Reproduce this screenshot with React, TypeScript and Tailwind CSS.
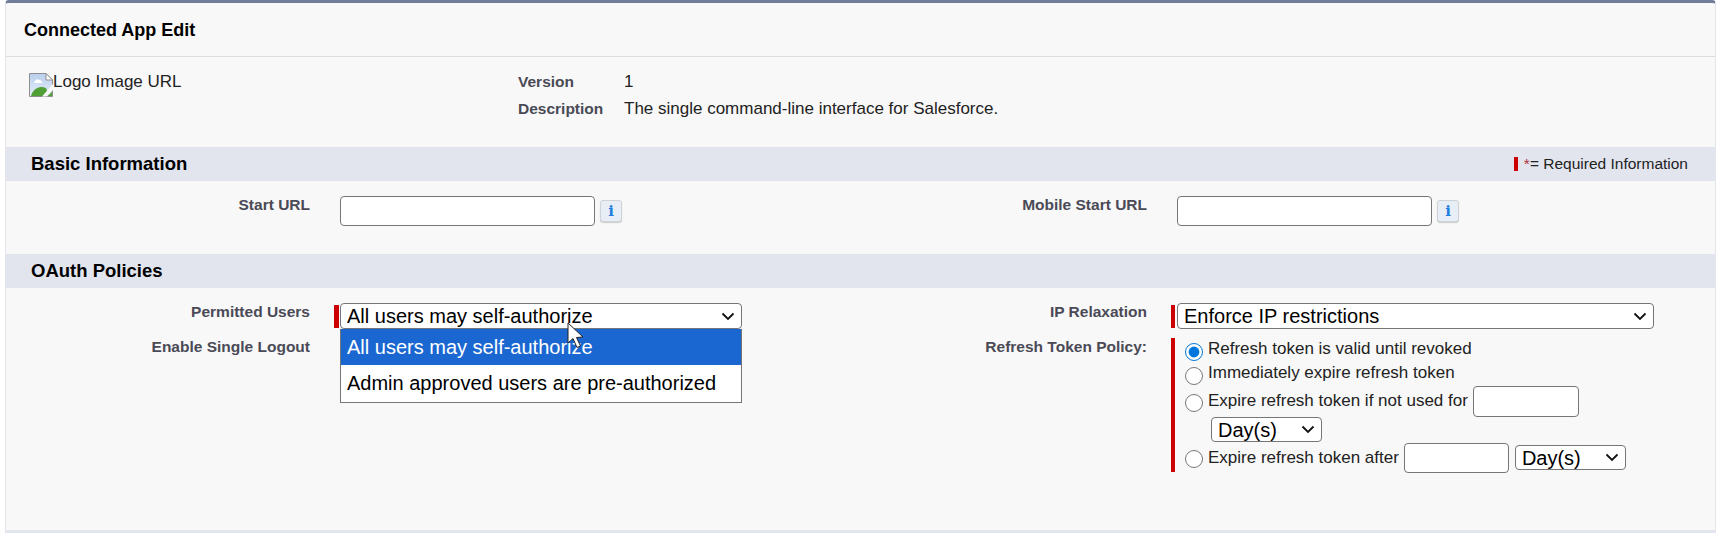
import React from "react";

const Chevron = () => (
  <svg width="14" height="9" viewBox="0 0 14 9" fill="none" className="shrink-0">
    <path d="M1.5 1.5 L7 7 L12.5 1.5" stroke="#111" strokeWidth="1.8" />
  </svg>
);

const SelectBox = ({ text, className }: { text: string; className: string }) => (
  <div className={`flex items-center justify-between bg-white border border-[#767676] rounded-[4px] text-[20px] leading-none text-black shrink-0 ${className}`}>
    <span className="whitespace-nowrap">{text}</span>
    <Chevron />
  </div>
);

const Input = ({ className }: { className: string }) => (
  <div className={`bg-white border border-[#767676] rounded-[4px] shrink-0 ${className}`} />
);

const Info = () => (
  <div className="ml-[5px] mt-[4px] w-[22px] h-[22px] rounded-[3px] border border-[#cfd2d6] bg-[#e8eef5] flex items-center justify-center text-[15px] font-bold text-[#1f7ee0] font-['DejaVu_Serif',serif] shadow-[0_1px_1px_#ccc]">
    i
  </div>
);

const Label = ({ children, className = "" }: { children: React.ReactNode; className?: string }) => (
  <div className={`w-[304px] shrink-0 text-right text-[15.5px] leading-[18px] font-bold text-[#4a4a56] ${className}`}>{children}</div>
);

const SectionHeader = ({ title, children }: { title: string; children?: React.ReactNode }) => (
  <div className="h-[34px] bg-[#e2e5ee] flex items-center justify-between pl-[25px] pr-[27px]">
    <div className="text-[18.5px] font-bold text-black">{title}</div>
    {children}
  </div>
);

const Radio = ({ checked = false, className = "" }: { checked?: boolean; className?: string }) => (
  <input type="radio" name="refresh" defaultChecked={checked} className={`w-[18px] h-[18px] m-0 shrink-0 accent-[#0075db] ${className}`} />
);

export default function App() {
  return (
    <div className="w-[1727px] h-[533px] bg-white pl-[5px] pr-[11px] overflow-hidden font-['Liberation_Sans',Arial,sans-serif]">
      <div className="relative h-full bg-[#f8f8f8] border-t-[3px] border-t-[#717d98] border-x border-x-[#e3e5ea] border-b-[3px] border-b-[#e2e5ee] rounded-t-[4px]">
        <div className="h-[52px] pt-[1px] border-b border-[#dcdcdc] box-content flex items-center pl-[18px] text-[18px] font-bold text-black">
          Connected App Edit
        </div>
        <div className="h-[90px] flex">
          <div className="w-[512px] pl-[23px] pt-[16px] flex items-start shrink-0">
            <svg width="24" height="24" viewBox="0 0 24 24" className="shrink-0">
              <defs>
                <linearGradient id="sky" x1="0" y1="0" x2="0" y2="1">
                  <stop offset="0" stopColor="#b9cfec" />
                  <stop offset="1" stopColor="#e6eefa" />
                </linearGradient>
              </defs>
              <path d="M0.5 0.5 H17 L23.5 7 V23.5 H0.5 Z" fill="url(#sky)" stroke="#8f8f8f" />
              <path d="M17 0.5 V7 H23.5 Z" fill="#fff" stroke="#8f8f8f" />
              <path d="M5 10 C6 7 9 5 10 7 C12 7 14 9 13 10 Z" fill="#fff" />
              <path d="M2 23 C4 16 10 12 17 15 L20 23 Z" fill="#4f9e36" />
              <path d="M13 23.5 L24 11 V17 L18 23.5 Z" fill="#f8f8f8" />
              <path d="M19 23 L23 18.5 V23 Z" fill="#4f9e36" />
            </svg>
            <span className="text-[17px] leading-[18px] text-[#222]">Logo Image URL</span>
          </div>
          <div className="pt-[11px] text-[17px] leading-[27px]">
            <div className="flex">
              <div className="w-[106px] font-bold text-[15.5px] text-[#4a4a56]">Version</div>
              <div className="text-[#222]">1</div>
            </div>
            <div className="flex">
              <div className="w-[106px] font-bold text-[15.5px] text-[#4a4a56]">Description</div>
              <div className="text-[#222]">The single command-line interface for Salesforce.</div>
            </div>
          </div>
        </div>

        <SectionHeader title="Basic Information">
          <div className="flex items-center text-[15.5px] text-[#222]">
            <span className="w-[4px] h-[14px] bg-[#cc0000] mr-[6px] ml-[1px]" />
            <span className="text-[#b03040] leading-none">*</span>
            <span>= Required Information</span>
          </div>
        </SectionHeader>
        <div className="h-[73px] flex pt-[15px]">
          <div className="w-[837px] flex">
            <Label>Start URL</Label>
            <Input className="ml-[30px] w-[255px] h-[30px]" />
            <Info />
          </div>
          <div className="flex">
            <Label>Mobile Start URL</Label>
            <Input className="ml-[30px] w-[255px] h-[30px]" />
            <Info />
          </div>
        </div>

        <SectionHeader title="OAuth Policies" />
        <div className="flex pt-[15px]">
          <div className="w-[837px]">
            <div className="flex h-[35px]">
              <Label>Permitted Users</Label>
              <div className="relative ml-[24px] flex">
                <div className="w-[5px] h-[23px] mt-[2px] mr-[1px] bg-[#cc0000]" />
                <SelectBox text="All users may self-authorize" className="w-[402px] h-[26px] pl-[6px] pr-[6px]" />
                <div className="absolute left-[6px] top-[26px] w-[402px] h-[74px] z-10 bg-white border border-[#767676] border-t-0 text-[20px]">
                  <div className="h-[36px] bg-[#1a67d2] text-white flex items-center pl-[6px]">All users may self-authorize</div>
                  <div className="h-[36px] text-black flex items-center pl-[6px]">Admin approved users are pre-authorized</div>
                </div>
                <svg width="18" height="27" viewBox="0 0 18 27" className="absolute left-[233px] top-[19px] z-20">
                  <path d="M1 1 L1 21 L6 16.5 L10 25.5 L13.5 24 L9.5 15.5 L16 15 Z" fill="#fff" stroke="#222" strokeWidth="1" />
                </svg>
              </div>
            </div>
            <Label>Enable Single Logout</Label>
          </div>
          <div>
            <div className="flex h-[35px]">
              <Label>IP Relaxation</Label>
              <div className="ml-[24px] flex">
                <div className="w-[4px] h-[23px] mt-[2px] mr-[2px] bg-[#cc0000]" />
                <SelectBox text="Enforce IP restrictions" className="w-[477px] h-[26px] pl-[6px] pr-[6px]" />
              </div>
            </div>
            <div className="flex">
              <Label>Refresh Token Policy:</Label>
              <div className="ml-[24px] h-[134px] pt-[2px] border-l-[4px] border-[#cc0000] pl-[10px] text-[17px] text-[#222] leading-[18px]">
                <div className="flex items-start h-[24px] pt-[3px]">
                  <Radio checked />
                  <span className="ml-[5px] -mt-[3px]">Refresh token is valid until revoked</span>
                </div>
                <div className="flex items-start h-[22px] pt-[3px]">
                  <Radio />
                  <span className="ml-[5px] -mt-[3px]">Immediately expire refresh token</span>
                </div>
                <div className="flex items-start h-[31px]">
                  <Radio className="mt-[8px]" />
                  <span className="ml-[5px] mt-[6px]">Expire refresh token if not used for</span>
                  <Input className="ml-[5px] w-[106px] h-[31px]" />
                </div>
                <SelectBox text="Day(s)" className="ml-[26px] w-[111px] h-[25px] pl-[6px] pr-[6px]" />
                <div className="flex items-start h-[29px] mt-[1px]">
                  <Radio className="mt-[7px]" />
                  <span className="ml-[5px] mt-[6px]">Expire refresh token after</span>
                  <Input className="ml-[5px] w-[105px] h-[30px]" />
                  <SelectBox text="Day(s)" className="ml-[6px] mt-[2px] w-[111px] h-[25px] pl-[6px] pr-[6px]" />
                </div>
              </div>
            </div>
          </div>
        </div>
      </div>
    </div>
  );
}
